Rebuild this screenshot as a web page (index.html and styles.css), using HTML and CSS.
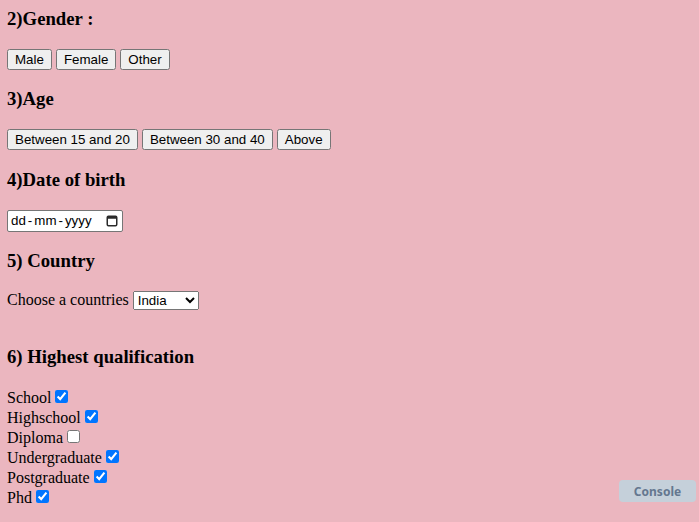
FILE: index.html
```html
<!DOCTYPE html>
<html>
<head>
<meta charset="utf-8">
<link rel="stylesheet" href="styles.css">
</head>
<body>
<div class="form">
  <h3 class="first">2)Gender :</h3>
  <div class="row">
    <button class="btn">Male</button>
    <button class="btn">Female</button>
    <button class="btn">Other</button>
  </div>
  <h3>3)Age</h3>
  <div class="row">
    <button class="btn">Between 15 and 20</button>
    <button class="btn">Between 30 and 40</button>
    <button class="btn">Above</button>
  </div>
  <h3>4)Date of birth</h3>
  <div class="row">
    <div class="date" role="textbox" aria-label="Date of birth">
      <span class="date-text">dd<span class="sep">-</span>mm<span class="sep">-</span>yyyy</span>
      <svg class="cal" width="12" height="13" viewBox="0 0 12 13">
        <rect x="1.25" y="2.25" width="9.5" height="9.5" rx="1.2" fill="none" stroke="#2b2b2b" stroke-width="1.5"/>
        <rect x="1.25" y="2.25" width="9.5" height="2.5" fill="#2b2b2b"/>
      </svg>
    </div>
  </div>
  <h3>5) Country</h3>
  <div class="row">
    Choose a countries <select class="country">
      <option>India</option>
      <option>USA</option>
      <option>UK</option>
      <option>China</option>
    </select>
  </div>
  <div class="spacer"></div>
  <h3>6) Highest qualification</h3>
  <div class="checks">
    <div class="check">School <input type="checkbox" checked></div>
    <div class="check">Highschool <input type="checkbox" checked></div>
    <div class="check">Diploma <input type="checkbox"></div>
    <div class="check">Undergraduate <input type="checkbox" checked></div>
    <div class="check">Postgraduate <input type="checkbox" checked></div>
    <div class="check">Phd <input type="checkbox" checked></div>
  </div>
</div>
<button class="console">Console</button>
</body>
</html>
```

FILE: styles.css
```css
html, body {
  background: #ebb6bf;
}
body {
  margin: 8px 8px 8px 7px;
  font-family: "Liberation Serif", "Times New Roman", serif;
  font-size: 16px;
  color: #000;
}
h3 {
  font-size: 18.72px;
  font-weight: bold;
  margin: 18.72px 0;
}
h3.first {
  margin-top: 0;
}
.btn {
  font-family: "Liberation Sans", Arial, sans-serif;
  font-size: 13.333px;
}
.date {
  display: inline-flex;
  align-items: center;
  justify-content: space-between;
  box-sizing: border-box;
  width: 116px;
  height: 22px;
  padding: 0 4px 0 3px;
  background: #fff;
  border: 1px solid #767676;
  border-radius: 2px;
  vertical-align: middle;
  font-family: "Liberation Sans", Arial, sans-serif;
  font-size: 13.333px;
  color: #000;
}
.sep {
  margin: 0 2px;
}
.cal {
  display: block;
}
.country {
  font-family: "Liberation Sans", Arial, sans-serif;
  font-size: 13.333px;
  width: 66px;
}
.spacer {
  height: 17px;
}
.checks {
  padding-top: 1px;
}
.check {
  height: 20px;
  line-height: 20px;
}
.check input {
  margin: 3px 3px 0 0;
  vertical-align: baseline;
}
.console {
  position: fixed;
  right: 3px;
  bottom: 20px;
  width: 77px;
  height: 22px;
  border: none;
  border-radius: 4px;
  background: #c5d0da;
  color: #64778f;
  font-family: "Noto Sans", "Open Sans", sans-serif;
  font-size: 12px;
  font-weight: 700;
  padding: 0;
}
```
